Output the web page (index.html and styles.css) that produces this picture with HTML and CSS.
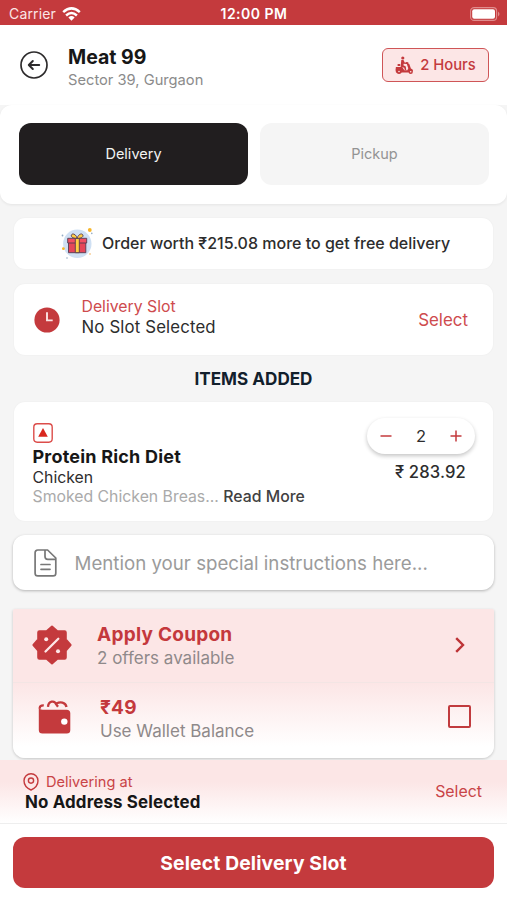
FILE: index.html
```html
<!DOCTYPE html>
<html lang="en">
<head>
<meta charset="utf-8">
<title>Meat 99</title>
<link rel="stylesheet" href="styles.css">
</head>
<body>
<div class="statusbar">
  <div class="carrier"><span>Carrier</span>
    <svg width="19" height="14" viewBox="0 0 19 14" fill="none" stroke="#fff" stroke-width="2.5"><path d="M1.2 5.2Q9.5-2.4 17.8 5.2M4.1 8.5Q9.5 3.5 14.9 8.5"/><path d="M6.4 10.5Q9.5 7.7 12.6 10.5L9.5 13.8Z" fill="#fff" stroke="none"/></svg>
  </div>
  <div class="clock">12:00 PM</div>
  <svg class="battery" width="31" height="14" viewBox="0 0 31 14"><rect x=".6" y=".6" width="26" height="12.8" rx="3.5" fill="none" stroke="#e08c8d" stroke-width="1.1"/><rect x="2.2" y="2.2" width="22.8" height="9.6" rx="2" fill="#fff"/><path d="M28 4.5Q31 7 28 9.5Z" fill="#e08c8d"/></svg>
</div>
<header class="header">
  <svg width="28" height="28" viewBox="0 0 28 28" fill="none" stroke="#2d2b2c" stroke-width="1.7" stroke-linecap="round" stroke-linejoin="round"><circle cx="14" cy="14" r="13"/><path stroke-width="2" d="M19.2 14H9M12.8 10L8.8 14l4 4"/></svg>
  <div class="store"><h1>Meat 99</h1><p>Sector 39, Gurgaon</p></div>
  <div class="eta">
    <svg width="19" height="19" viewBox="0 0 19 19" fill="#c43a3d"><circle cx="7.8" cy="2" r="1.6"/><path d="M6.3 4.1l2.2-.2 1.2 2.5 2.4.6-.2 1.1-3.2-.4-.3 1.6 2.4 1.3.4 3.4H9.8l-.6-2.2-3.6-1.1Z"/><path d="M1 11h6.2l2.1 3.2h3.1l.9-2-1.7-4.8-1-.5.3-.9 2.4.2v1.3l1 .4 1.6 4.7a3 3 0 0 1 2.2 2.2l-2.5.5-2 1.3H1Q.2 13.3.9 11Z"/><path d="M2.6 8h2.6v2H2.6z"/><circle cx="4" cy="15.3" r="2.7"/><circle cx="15.7" cy="15.8" r="2.2"/><circle cx="4" cy="15.5" r=".8" fill="#fce6e6"/><circle cx="15.7" cy="15.8" r=".8" fill="#fce6e6"/></svg>
    <span>2 Hours</span>
  </div>
</header>
<nav class="tabs"><button class="tab active">Delivery</button><button class="tab">Pickup</button></nav>
<main class="content">
  <section class="card promo">
    <svg width="33" height="33" viewBox="0 0 33 33"><circle cx="16.3" cy="16.8" r="14.2" fill="#cfe0f3"/><circle cx="28.8" cy="3" r="1.9" fill="#f6b62b"/><circle cx="2.4" cy="21.7" r="1.4" fill="#f6b62b"/><circle cx="29" cy="27" r="1" fill="#f7cf9b"/><circle cx="1.5" cy="8.5" r=".9" fill="#94acc5"/><circle cx="30.8" cy="6.4" r=".8" fill="#94acc5"/><circle cx="6" cy="31" r=".8" fill="#94acc5"/><g stroke="#543b50" stroke-width=".9" stroke-linejoin="round"><path fill="#e54659" d="M7.5 15.5h17.3v10.2H7.5z"/><path fill="#f24f62" d="M6.7 11.3h19v4.7h-19z"/><path fill="#ffcd43" d="M14.3 11.3h4v14.4h-4z"/><path fill="#ffcd43" d="M16.1 11.3C13.3 11.4 9.5 10.5 10.4 8c1.3-2.5 5.1-.2 5.7 3.3.8-3.5 4.6-5.8 5.8-3.3.9 2.4-3 3.4-5.8 3.3Z"/></g></svg>
    <p>Order worth ₹215.08 more to get free delivery</p>
  </section>
  <section class="card slot">
    <svg width="26" height="26" viewBox="0 0 26 26"><circle cx="13" cy="13" r="12.6" fill="#c43a3d"/><path d="M13 5.3V13.4H18.7" fill="none" stroke="#fbe3e3" stroke-width="1.9"/></svg>
    <div class="slot-text"><p class="red">Delivery Slot</p><p class="slot-value">No Slot Selected</p></div>
    <a class="select">Select</a>
  </section>
  <h2>ITEMS ADDED</h2>
  <section class="card item">
    <div class="details">
      <svg width="20" height="20" viewBox="0 0 20 20"><rect x=".8" y=".8" width="18.4" height="18.4" rx="3.4" fill="#fff" stroke="#dc4d4a" stroke-width="1.4"/><path d="M10 5l4.8 8.8H5.2Z" fill="#d9271f"/></svg>
      <h3>Protein Rich Diet</h3>
      <p class="kind">Chicken</p>
      <p class="desc">Smoked Chicken Breas... <b>Read More</b></p>
    </div>
    <div class="amount">
      <div class="stepper">
        <svg width="12" height="12" viewBox="0 0 12 12" stroke="#c43a3d" stroke-width="1.5"><path d="M.5 6h11"/></svg><span>2</span><svg width="12" height="12" viewBox="0 0 12 12" stroke="#c43a3d" stroke-width="1.5"><path d="M.5 6h11M6 .5v11"/></svg>
      </div>
      <p class="price">₹ 283.92</p>
    </div>
  </section>
  <section class="note">
    <svg width="23" height="28" viewBox="0 0 23 28" fill="none" stroke="#777" stroke-width="1.7" stroke-linecap="round" stroke-linejoin="round"><path d="M3.8 1h9.8L21.8 9v15.2a2.7 2.7 0 0 1-2.7 2.7H3.8a2.7 2.7 0 0 1-2.7-2.7V3.7A2.7 2.7 0 0 1 3.8 1ZM11 1.2v6.3q0 2.8 2.8 2.8h7.6M7 15.5h9M7 20.3h9"/></svg>
    <p>Mention your special instructions here...</p>
  </section>
  <section class="offers">
    <div class="coupon">
      <svg width="40" height="40" viewBox="0 0 40 40"><path d="M20 1.5l5.4 4.7h7.2q1.2 0 1.2 1.2v7.1L38.6 20l-4.8 5.5v7.1q0 1.2-1.2 1.2h-7.2L20 38.5l-5.4-4.7H7.4q-1.2 0-1.2-1.2v-7.1L1.4 20l4.8-5.5V7.4q0-1.2 1.2-1.2h7.2Z" fill="#c43a3d" stroke="#c43a3d" stroke-width="2" stroke-linejoin="round"/><path d="M13.5 26.5l12.8-12.8" stroke="#fde7e7" stroke-width="2.3" stroke-linecap="round"/><circle cx="14.2" cy="14.3" r="2" fill="#fde7e7"/><circle cx="26" cy="26.2" r="2" fill="#fde7e7"/></svg>
      <div class="offer-text"><h3>Apply Coupon</h3><p>2 offers available</p></div>
      <svg class="chevron" width="10" height="16" viewBox="0 0 10 16" fill="none" stroke="#bd3437" stroke-width="2.4"><path d="M1.2 1.2L8 8l-6.8 6.8"/></svg>
    </div>
    <div class="wallet">
      <svg width="33" height="34" viewBox="0 0 33 34"><path d="M.8 7Q1 9.8 4.8 9.8H28.6Q32.3 9.8 32.3 13.3V30Q32.3 33.5 28.8 33.5H4.4Q.8 33.5.8 30Z" fill="#c43a3d"/><path d="M2 8.8Q1.2 5.1 5.8 5.3M10 6.8C10.5 1 16.5-.2 18.3 4.5L20 6.8M18.5 3.6C22 1.5 27.500 2 28.5 7" fill="none" stroke="#c43a3d" stroke-width="2.3"/><circle cx="26.3" cy="21.6" r="3.2" fill="#fff"/></svg>
      <div class="offer-text"><h3>₹49</h3><p>Use Wallet Balance</p></div>
      <span class="checkbox"></span>
    </div>
  </section>
</main>
<section class="address">
  <div><p class="delivering"><svg width="16" height="18" viewBox="0 0 16 18" fill="none" stroke="#c43a3d" stroke-width="1.4"><path d="M8 17C4.8 15.6 1 12.8 1 7.8a7 7 0 0 1 14 0C15 12.8 11.2 15.6 8 17Z"/><circle cx="8" cy="7.6" r="2.6"/></svg><span>Delivering at</span></p><h3>No Address Selected</h3></div>
  <a>Select</a>
</section>
<footer><button class="cta">Select Delivery Slot</button></footer>
</body>
</html>
```

FILE: styles.css
```css
* { box-sizing: border-box; }
body { margin: 0; width: 507px; height: 900px; overflow: hidden; display: flex; flex-direction: column; background: #f5f5f5; color: #2d2d2d; font-family: Inter, "Noto Sans", sans-serif; }
h1, h2, h3, p { margin: 0; white-space: nowrap; }
button { border: 0; font-family: inherit; }
svg { flex: none; display: block; }

.statusbar { height: 25px; flex: none; background: #c43a3d; color: #fff; display: grid; grid-template-columns: 1fr auto 1fr; align-items: center; padding: 2px 6px 0 9px; }
.carrier { display: flex; gap: 6px; align-items: center; font-size: 14px; line-height: 18px; color: #fbe6e6; letter-spacing: .15px; }
.clock { font-size: 14px; font-weight: 600; letter-spacing: .5px; margin-right: 2px; }
.battery { justify-self: end; }

.header { height: 80px; flex: none; background: #fff; display: flex; align-items: center; padding: 0 18px 0 20px; }
.store { margin-left: 20px; flex: 1; padding-top: 5px; }
.store h1 { font-size: 19.5px; line-height: 24px; font-weight: 700; color: #171717; }
.store p { font-size: 14.7px; line-height: 22px; color: #8b8b8b; }
.eta { width: 107px; height: 34px; border: 1.5px solid #cf5557; border-radius: 6px; background: #fce6e6; color: #c43a3d; display: flex; align-items: center; justify-content: center; gap: 6px; font-size: 14.8px; font-weight: 500; }

.tabs { height: 99px; flex: none; background: #fff; border-radius: 12px; display: grid; grid-template-columns: 1fr 1fr; gap: 12px; padding: 18px 18px 19px 19px; box-shadow: 0 1px 3px #00000012; }
.tab { border-radius: 12px; background: #f5f5f5; color: #939393; font-size: 14.5px; padding-bottom: 2px; }
.tab.active { background: #211e1f; color: #f2f2f2; }

.content { height: 556px; flex: none; padding: 14px 13px 0; display: flex; flex-direction: column; }
.card { background: #fff; border-radius: 11px; margin: 0 1px; flex: none; box-shadow: 0 0 2px #0000000d; }
.promo { height: 51px; display: flex; align-items: center; padding: 0 0 1px 47px; gap: 8px; font-size: 16px; font-weight: 500; }
.slot { height: 71px; margin-top: 15px; display: flex; align-items: center; padding: 0 25px 0 20px; }
.slot-text { margin-left: 21.5px; margin-top: -6px; flex: 1; font-size: 15.8px; line-height: 20px; }
.slot-value { font-size: 16.8px; letter-spacing: .15px; }
.red, .select { color: #ce4b4e; }
.select { font-size: 16.9px; }
h2 { height: 47px; line-height: 47px; text-align: center; font-size: 17.1px; font-weight: 700; color: #12202c; }
.item { height: 119px; display: flex; justify-content: space-between; padding: 21px 18px 0 18.5px; }
.item h3 { font-size: 18px; line-height: 23px; font-weight: 700; letter-spacing: .2px; margin-top: 2px; color: #171717; }
.kind { font-size: 15.8px; line-height: 19px; }
.desc { font-size: 15.8px; line-height: 20px; color: #aaa; }
.desc b { font-weight: 500; color: #414141; }
.amount { display: flex; flex-direction: column; align-items: flex-end; margin-top: -5px; }
.stepper { width: 108px; height: 36px; border-radius: 18px; background: #fff; box-shadow: 0 2px 4px #0000003b; display: flex; align-items: center; justify-content: space-between; padding: 0 13px; font-size: 16.5px; }
.price { margin: 8px 9px 0 0; font-size: 16.6px; line-height: 20px; font-weight: 500; letter-spacing: .15px; }

.note { height: 55px; flex: none; margin-top: 14px; border-radius: 12px; background: #fff; box-shadow: 0 1px 3px #0004; display: flex; align-items: center; gap: 17.5px; padding-left: 21px; color: #9b9b9b; font-size: 18.7px; }
.note p { padding-top: 1px; }
.offers { height: 149px; flex: none; margin-top: 19px; border-radius: 2px 2px 12px 12px; box-shadow: 0 1px 3px #0003; overflow: hidden; }
.coupon { height: 74px; background: #fce6e6; border-bottom: 1px solid #f3e5e4; display: flex; align-items: center; padding: 0 29px 1px 19px; }
.wallet { height: 75px; background: linear-gradient(#fce6e6, #fff 85%); display: flex; align-items: center; padding: 0 23px 8px 25px; }
.offer-text { flex: 1; margin-left: 25px; padding-top: 2px; }
.wallet .offer-text { margin-left: 29px; padding-top: 4px; }
.offer-text h3 { color: #c4383c; font-size: 19px; line-height: 25px; font-weight: 700; letter-spacing: .25px; }
.offer-text p { color: #8f898a; font-size: 17px; line-height: 23px; }
.checkbox { width: 23px; height: 23px; border: 2px solid #c13b3e; border-radius: 2px; }

.address { height: 64px; flex: none; background: linear-gradient(#fce6e6 35%, #fff); border-bottom: 1px solid #eee; padding: 0 25px 0 23px; display: flex; align-items: center; justify-content: space-between; color: #c94447; font-size: 15.9px; }
.delivering { display: flex; gap: 7px; align-items: center; font-size: 14.6px; line-height: 20px; }
.address h3 { color: #171717; font-size: 16.9px; line-height: 20px; font-weight: 700; letter-spacing: .15px; margin-left: 2px; }
footer { height: 76px; flex: none; background: #fff; padding: 13px 13px 12px; }
.cta { width: 100%; height: 51px; border-radius: 12px; background: #c43a3d; color: #fff; font-size: 19.3px; font-weight: 700; letter-spacing: .15px; }
```
